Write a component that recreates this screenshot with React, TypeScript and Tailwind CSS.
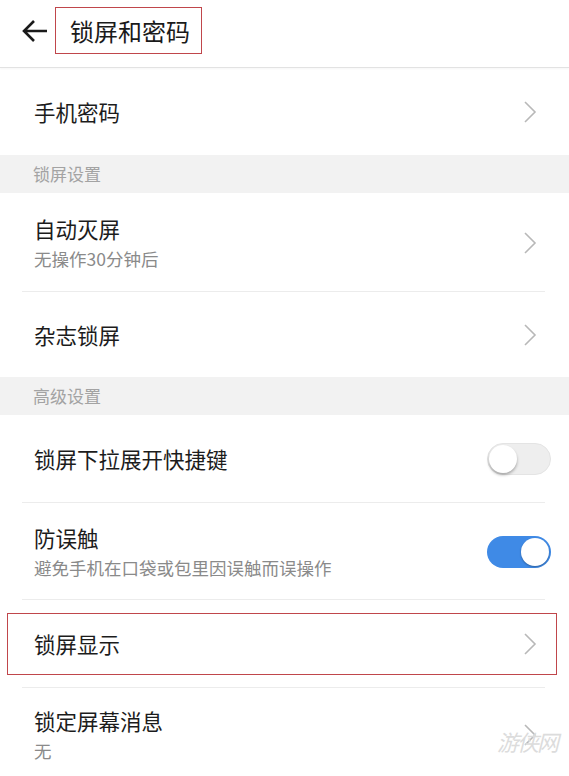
import React from "react";

const font = { fontFamily: '"Noto Sans CJK SC", "Noto Sans", sans-serif' };

function Chevron() {
  return (
    <svg width="14" height="22" viewBox="0 0 14 22" className="shrink-0">
      <path d="M2 1 L12 11 L2 21" fill="none" stroke="#b8b8b8" strokeWidth="1.6" />
    </svg>
  );
}

function Toggle({ on }: { on: boolean }) {
  return on ? (
    <div className="w-[64px] h-[32px] rounded-full bg-[#3f8ae6] flex items-center justify-end pr-[2px] shrink-0">
      <div className="w-[28px] h-[28px] rounded-full bg-white shadow-[0_1px_2px_rgba(0,0,0,0.3)]" />
    </div>
  ) : (
    <div className="w-[64px] h-[32px] rounded-full bg-[#eeeeee] border border-[#e4e4e4] flex items-center pl-[1px] shrink-0">
      <div className="w-[28px] h-[28px] rounded-full bg-white shadow-[0_2px_3px_rgba(0,0,0,0.3)]" />
    </div>
  );
}

function Row({
  title,
  sub,
  right,
  h,
  divider = true,
  extraPad = "",
}: {
  title: string;
  sub?: string;
  right: React.ReactNode;
  h: string;
  divider?: boolean;
  extraPad?: string;
}) {
  return (
    <div className={`relative flex items-center pl-[34px] ${extraPad || "pr-[32px]"} ${h}`}>
      <div className="flex-1 flex flex-col">
        <div className="text-[21.5px] leading-[30px] text-[#1c1c1c]">{title}</div>
        {sub && <div className="text-[17.5px] leading-[27px] text-[#8a8a8a] mt-[1px]">{sub}</div>}
      </div>
      {right}
      {divider && <div className="absolute left-[22px] right-[24px] bottom-0 h-px bg-[#ececec]" />}
    </div>
  );
}

function Section({ label }: { label: string }) {
  return (
    <div className="h-[38px] bg-[#f2f2f2] flex items-center pl-[33px] text-[17px] text-[#a3a3a3]">
      {label}
    </div>
  );
}

export default function App() {
  return (
    <div className="w-[569px] h-[776px] bg-white overflow-hidden relative" style={font}>
      {/* Header */}
      <div className="h-[68px] flex items-center border-b border-[#e2e2e2] shadow-[0_1px_2px_rgba(0,0,0,0.04)]">
        <svg width="28" height="24" viewBox="0 0 28 24" className="ml-[21px] mr-[6px] mb-[6px]">
          <path d="M26 12 H3 M13 2 L3 12 L13 22" fill="none" stroke="#1a1a1a" strokeWidth="2.6" />
        </svg>
        <div className="mb-[6px] border border-[#c0464b] h-[47px] w-[147px] flex items-center pl-[14px] text-[24px] text-[#1a1a1a]">
          锁屏和密码
        </div>
      </div>

      <Row title="手机密码" right={<Chevron />} h="h-[87px]" divider={false} />
      <Section label="锁屏设置" />
      <Row title="自动灭屏" sub="无操作30分钟后" right={<Chevron />} h="h-[99px]" />
      <Row title="杂志锁屏" right={<Chevron />} h="h-[85px]" divider={false} />
      <Section label="高级设置" />
      <Row title="锁屏下拉展开快捷键" right={<Toggle on={false} />} h="h-[88px]" extraPad="pr-[18px]" />
      <Row
        title="防误触"
        sub="避免手机在口袋或包里因误触而误操作"
        right={<Toggle on={true} />}
        h="h-[97px]"
        extraPad="pr-[18px]"
      />
      <div className="relative">
        <Row title="锁屏显示" right={<Chevron />} h="h-[88px]" />
        <div className="absolute left-[7px] top-[13px] w-[550px] h-[62px] border border-[#c0464b] pointer-events-none" />
      </div>
      <Row title="锁定屏幕消息" sub="无" right={<Chevron />} h="h-[93px]" divider={false} />

      <div
        className="absolute right-[12px] bottom-[18px] text-[22px] text-[#dcdcdc] tracking-[-2px] italic"
        style={{ fontFamily: '"Noto Sans CJK SC", serif' }}
      >
        游侠网
      </div>
    </div>
  );
}
